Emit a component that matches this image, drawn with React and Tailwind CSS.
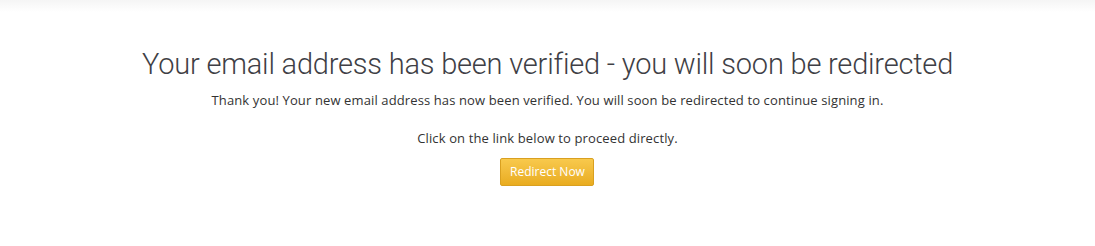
export default function App() {
  return (
    <div className="w-[1095px] h-[246px] bg-white relative overflow-hidden">
      {/* top fade */}
      <div className="h-[12px] bg-gradient-to-b from-[#f5f5f5] to-white" />

      <div className="flex flex-col items-center pt-[35px] text-center">
        <h1
          className="text-[29px] leading-[35px] font-light text-[#3f3f46] tracking-[-0.2px]"
          style={{ fontFamily: 'Roboto, "Liberation Sans", sans-serif' }}
        >
          Your email address has been verified - you will soon be redirected
        </h1>
        <div style={{ fontFamily: '"Open Sans", "Noto Sans", sans-serif' }} className="text-[13px] text-[#333] tracking-[0.12px]">
          <p className="mt-[9px] leading-[18px]">
            Thank you! Your new email address has now been verified. You will soon be redirected to continue signing in.
          </p>
          <p className="mt-[20px] leading-[18px]">Click on the link below to proceed directly.</p>
          <button className="mt-[11px] w-[94px] h-[28px] rounded-[2px] border border-[#d9a020] bg-gradient-to-b from-[#f8c94c] to-[#e9ac1e] text-white text-[12px] tracking-normal">
            Redirect Now
          </button>
        </div>
      </div>
    </div>
  );
}
